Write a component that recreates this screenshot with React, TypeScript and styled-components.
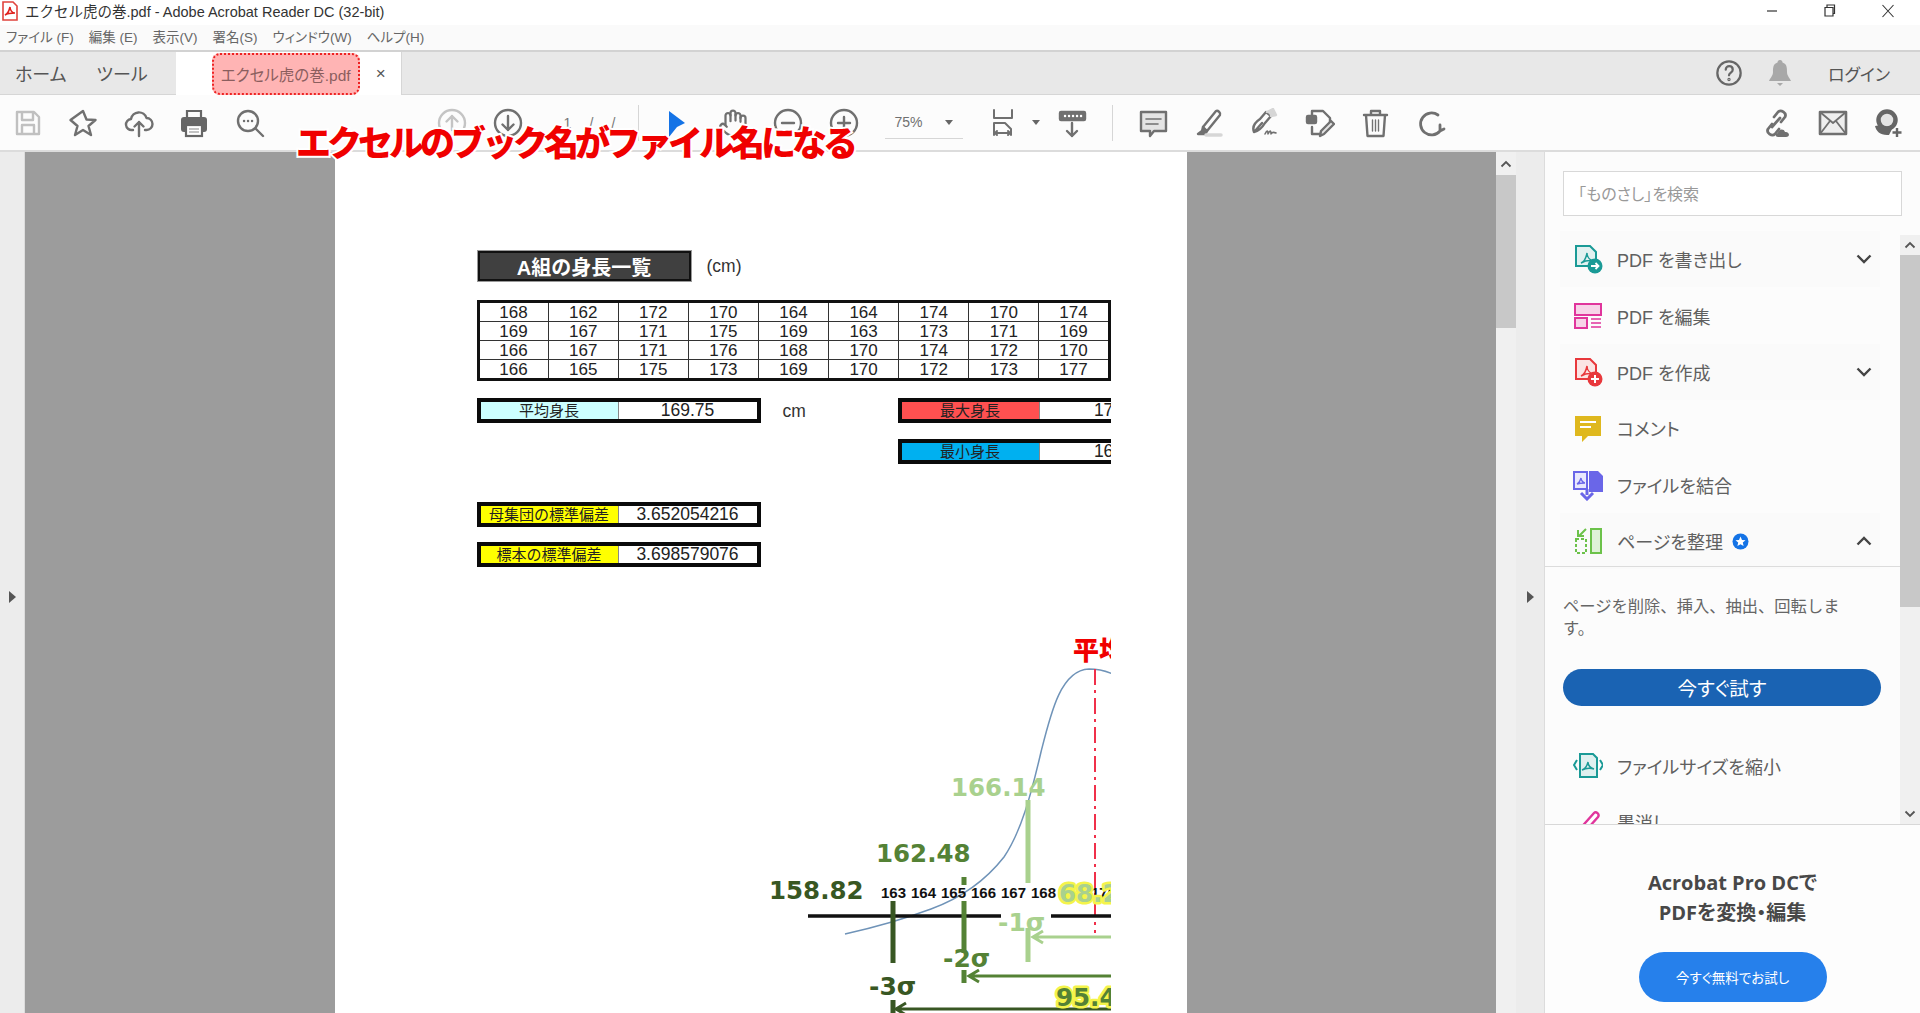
import React, { FC, ReactNode } from "react";
import styled, { createGlobalStyle } from "styled-components";
import { Hand } from "lucide-react";

const JP = `"Liberation Sans", "Noto Sans CJK JP", sans-serif`;

const GlobalStyle = createGlobalStyle`
  html, body {
    margin: 0;
    padding: 0;
    background: #fff;
    font-family: ${JP};
  }
`;

const Window = styled.div`
  position: relative;
  width: 1920px;
  height: 1013px;
  overflow: hidden;
  display: flex;
  flex-direction: column;
  color: #444;
  font-feature-settings: "palt";
`;

/* ---- title + menu ---- */
const TitleBar = styled.div`
  height: 25px;
  flex: none;
  box-sizing: border-box;
  display: flex;
  align-items: center;
  background: #fff;
  padding: 0 0 4px 2px;
`;

const TitleText = styled.div`
  margin-left: 7px;
  font-size: 14.5px;
  color: #333;
  white-space: nowrap;
  font-feature-settings: normal;
`;

const WindowButtons = styled.div`
  margin-left: auto;
  display: flex;
  align-items: center;
  padding-right: 25px;
  gap: 45px;
`;

const MenuBar = styled.div`
  height: 25px;
  flex: none;
  box-sizing: border-box;
  display: flex;
  align-items: center;
  background: #fafafa;
  padding: 0 0 3px 6px;
  gap: 15px;
`;

const MenuItem = styled.div`
  font-size: 13.5px;
  color: #666;
  white-space: nowrap;
`;

/* ---- tabs ---- */
const TabBar = styled.div`
  height: 45px;
  flex: none;
  box-sizing: border-box;
  display: flex;
  align-items: stretch;
  background: #e8e8e8;
  border-top: 2px solid #d2d2d2;
  border-bottom: 1px solid #d6d6d6;
`;

const NavTab = styled.div`
  display: flex;
  align-items: center;
  font-size: 18px;
  color: #555;
  margin-left: ${(props: { $left: number }) => props.$left}px;
  white-space: nowrap;
`;

const ActiveTab = styled.div`
  position: relative;
  margin-left: 28px;
  width: 225px;
  margin-bottom: -1px;
  background: #fff;
  display: flex;
  align-items: center;
  border-right: 1px solid #d6d6d6;
`;

const TabLabel = styled.div`
  box-sizing: border-box;
  margin-left: 36px;
  width: 148px;
  height: 42px;
  border: 2px dotted #ee2222;
  border-radius: 8px;
  background: #ffb4b4;
  color: #8b5e5e;
  font-size: 15.5px;
  display: flex;
  align-items: center;
  justify-content: center;
  white-space: nowrap;
`;

const TabClose = styled.div`
  margin-left: 16px;
  font-size: 17px;
  color: #555;
`;

const TabRight = styled.div`
  margin-left: auto;
  display: flex;
  align-items: center;
  padding-right: 30px;
  gap: 24px;
`;

const LoginText = styled.div`
  font-size: 17px;
  color: #555;
  margin-left: 11px;
  white-space: nowrap;
`;

/* ---- toolbar ---- */
const Toolbar = styled.div`
  height: 57px;
  flex: none;
  box-sizing: border-box;
  display: flex;
  align-items: center;
  background: #fcfcfc;
  border-bottom: 2px solid #dcdcdc;
`;

const ToolButton = styled.div`
  width: 55.5px;
  flex: none;
  display: flex;
  align-items: center;
  justify-content: center;
  color: #707070;
`;

const ToolGap = styled.div`
  flex: none;
  width: ${(props: { $w: number }) => props.$w}px;
`;

const ToolSeparator = styled.div`
  flex: none;
  width: 1px;
  height: 36px;
  background: #d6d6d6;
`;

const PageNum = styled.div`
  flex: none;
  width: 102px;
  display: flex;
  justify-content: space-between;
  padding: 0 22px 0 28px;
  box-sizing: border-box;
  font-size: 14px;
  color: #777;
`;

const ZoomBox = styled.div`
  flex: none;
  box-sizing: border-box;
  width: 78px;
  height: 32px;
  display: flex;
  align-items: center;
  justify-content: space-between;
  padding: 0 10px 0 10px;
  border-bottom: 1px solid #d6d6d6;
  font-size: 14px;
  color: #707070;
`;

const Caret = styled.div`
  width: 0;
  height: 0;
  border-left: 4px solid transparent;
  border-right: 4px solid transparent;
  border-top: 5px solid #666;
`;

const Caption = styled.div`
  position: absolute;
  left: 296px;
  top: 119px;
  font-family: "Noto Sans CJK JP", sans-serif;
  font-feature-settings: normal;
  font-size: 35px;
  font-weight: 900;
  letter-spacing: -4px;
  line-height: 44px;
  color: #f00000;
  white-space: nowrap;
  -webkit-text-stroke: 4px #fff;
  paint-order: stroke fill;
`;

/* ---- main ---- */
const Main = styled.div`
  flex: 1;
  min-height: 0;
  display: flex;
`;

const Rail = styled.div`
  flex: none;
  width: ${(props: { $w: number }) => props.$w}px;
  display: flex;
  align-items: center;
  justify-content: center;
  background: #ececec;
  border-right: 1px solid #dcdcdc;
  box-sizing: border-box;
`;

const RailArrow = styled.div`
  width: 0;
  height: 0;
  margin-top: 28px;
  border-top: 6px solid transparent;
  border-bottom: 6px solid transparent;
  border-left: 7px solid #555;
`;

const DocArea = styled.div`
  flex: 1;
  min-width: 0;
  background: #9c9c9c;
  display: flex;
  justify-content: center;
`;

const PdfPage = styled.div`
  width: 852px;
  height: 100%;
  box-sizing: border-box;
  background: #fff;
  padding: 98px 76px 0 142px;
  overflow: hidden;
  color: #222;
  font-feature-settings: normal;
`;

const PageContent = styled.div`
  width: 634px;
  overflow: hidden;
`;

const Heading = styled.div`
  display: flex;
  align-items: center;
  gap: 15px;
  height: 32px;
`;

const HeadingBox = styled.div`
  box-sizing: border-box;
  width: 215px;
  height: 32px;
  background: #404040;
  border: 3px solid #111;
  outline: 1px solid #999;
  outline-offset: -1px;
  color: #fff;
  font-size: 20px;
  font-weight: 700;
  display: flex;
  align-items: center;
  justify-content: center;
`;

const UnitText = styled.div`
  flex: none;
  font-size: 17.5px;
  color: #333;
`;

const StatUnit = styled(UnitText)`
  margin: 2px 0 0 22px;
  width: 115px;
`;

const HeightTable = styled.table`
  margin-top: 18px;
  width: 634px;
  height: 79px;
  table-layout: fixed;
  border-collapse: collapse;
  border: 3.5px solid #111;
`;

const HeightCell = styled.td`
  padding: 0;
  height: 18px;
  line-height: 17px;
  text-align: center;
  font-size: 17px;
  color: #222;
  border: 1.5px solid #333;
  border-left-width: 1px;
  border-right-width: 1px;
`;

const StatRow = styled.div`
  display: flex;
  align-items: center;
  margin-top: ${(props: { $top: number }) => props.$top}px;
`;

const Stat = styled.div`
  flex: none;
  box-sizing: border-box;
  width: 284px;
  height: 25px;
  border: 4px solid #0a0a0a;
  display: flex;
  background: #fff;
  margin-left: ${(props: { $left?: number }) => props.$left ?? 0}px;
`;

const StatLabel = styled.div`
  flex: none;
  width: 138px;
  background: ${(props: { $bg: string }) => props.$bg};
  border-right: 1px solid #888;
  box-sizing: border-box;
  display: flex;
  align-items: center;
  justify-content: center;
  font-size: 15px;
  color: #222;
  line-height: 17px;
  white-space: nowrap;
`;

const StatValue = styled.div`
  flex: 1;
  display: flex;
  align-items: center;
  justify-content: center;
  font-size: 17.5px;
  line-height: 17px;
  color: #222;
`;

const Chart = styled.svg`
  display: block;
  margin-top: 63px;
  width: 634px;
  height: 383px;
`;

const ChartNumber = styled.text`
  font-family: "DejaVu Sans", sans-serif;
  font-weight: 700;
  font-size: 24.5px;
  fill: ${(props: { $fill: string }) => props.$fill};
`;

const GlowNumber = styled(ChartNumber)`
  stroke: #f4f44a;
  stroke-width: 5px;
  stroke-linejoin: round;
  paint-order: stroke fill;
`;

const AxisNumber = styled.text`
  font-family: "Liberation Sans", sans-serif;
  font-weight: 700;
  font-size: 15px;
  fill: #111;
`;

const Sigma = styled.text`
  font-family: "DejaVu Sans", sans-serif;
  font-weight: 700;
  font-size: 25px;
  fill: ${(props: { $fill: string }) => props.$fill};
`;

const MeanLabel = styled.text`
  font-family: "Noto Sans CJK JP", sans-serif;
  font-weight: 900;
  font-size: 26px;
  fill: #f00000;
`;

/* ---- scrollbars ---- */
const ScrollBar = styled.div`
  flex: none;
  width: 20px;
  margin-top: ${(props: { $top?: number }) => props.$top ?? 0}px;
  background: #f0f0f0;
  display: flex;
  flex-direction: column;
  align-items: center;
`;

const ScrollArrow = styled.div`
  flex: none;
  height: ${(props: { $h: number }) => props.$h}px;
  display: flex;
  align-items: center;
  justify-content: center;
`;

const ScrollThumb = styled.div`
  flex: none;
  width: 100%;
  height: ${(props: { $h: number }) => props.$h}px;
  background: #c8c8c8;
`;

const ScrollFill = styled.div`
  flex: 1;
`;

/* ---- right pane ---- */
const RightPane = styled.div`
  flex: none;
  width: 375px;
  background: #fcfcfc;
  display: flex;
  flex-direction: column;
`;

const SearchBox = styled.div`
  flex: none;
  box-sizing: border-box;
  margin: 19px 0 15px 18px;
  width: 339px;
  height: 45px;
  background: #fff;
  border: 1px solid #d8d8d8;
  padding: 0 0 2px 14px;
  display: flex;
  align-items: center;
  font-size: 16px;
  color: #999;
`;

const ToolsArea = styled.div`
  flex: 1;
  min-height: 0;
  display: flex;
  overflow: hidden;
`;

const ToolsList = styled.div`
  flex: 1;
  min-width: 0;
  overflow: hidden;
`;

const ToolRow = styled.div`
  box-sizing: border-box;
  margin-left: 15px;
  width: 320px;
  height: 56.4px;
  padding: 0 8px 0 10px;
  display: flex;
  align-items: center;
  background: ${(props: { $shaded?: boolean }) =>
    props.$shaded ? "#fafafa" : "transparent"};
`;

const ToolIcon = styled.div`
  flex: none;
  width: 36px;
  display: flex;
  justify-content: center;
`;

const ToolLabel = styled.div`
  margin-left: 11px;
  font-size: 18px;
  color: #606060;
  white-space: nowrap;
`;

const Chevron = styled.svg`
  margin-left: auto;
`;

const Divider = styled.div`
  height: 1px;
  margin-top: -3px;
  background: #dcdcdc;
`;

const Description = styled.div`
  margin: 28px 0 0 18px;
  width: 285px;
  font-size: 16.3px;
  line-height: 22px;
  color: #666;
  font-feature-settings: normal;
`;

const TryButton = styled.div`
  box-sizing: border-box;
  margin: 30px 0 31px 18px;
  width: 318px;
  height: 37px;
  border-radius: 19px;
  background: #1a63b3;
  color: #fff;
  font-size: 19.5px;
  display: flex;
  align-items: center;
  justify-content: center;
`;

const Promo = styled.div`
  flex: none;
  height: 189px;
  box-sizing: border-box;
  border-top: 1px solid #d8d8d8;
  padding-top: 43px;
  display: flex;
  flex-direction: column;
  align-items: center;
  background: #fdfdfd;
`;

const PromoText = styled.div`
  font-family: "Open Sans", "Noto Sans CJK JP", sans-serif;
  font-size: 20px;
  line-height: 30px;
  font-weight: 700;
  color: #484848;
  text-align: center;
`;

const PromoButton = styled.div`
  margin-top: 24px;
  width: 188px;
  height: 50px;
  border-radius: 25px;
  background: #2680eb;
  color: #fff;
  font-size: 13.5px;
  display: flex;
  align-items: center;
  justify-content: center;
`;

const StarBadge = styled.svg`
  margin-left: 9px;
  flex: none;
`;

/* ---- icons ---- */
const Line = styled.svg`
  fill: none;
  stroke: ${(props: { $c?: string }) => props.$c ?? "#707070"};
  stroke-width: 2.4;
  stroke-linecap: round;
  stroke-linejoin: round;
  display: block;
`;

const Ic: FC<{ children: ReactNode; c?: string; size?: number }> = ({
  children,
  c,
  size = 30,
}) => (
  <Line $c={c} width={size} height={size} viewBox="0 0 30 30">
    {children}
  </Line>
);

const PdfMark: FC<{ c: string }> = ({ c }) => (
  <path
    d="M8 19c3-1 5-5 6-10 0 4 3 7 6 8-4-1-8 0-12 2z"
    fill="none"
    stroke={c}
    strokeWidth="1.5"
  />
);

const ChevronIcon: FC<{ up?: boolean }> = ({ up }) => (
  <Chevron width="16" height="10" viewBox="0 0 16 10">
    <path
      d={up ? "M1.5 8.5 8 2l6.5 6.5" : "M1.5 1.5 8 8l6.5-6.5"}
      fill="none"
      stroke="#444"
      strokeWidth="2.4"
    />
  </Chevron>
);

const SmallArrow: FC<{ up?: boolean }> = ({ up }) => (
  <svg width="12" height="8" viewBox="0 0 12 8">
    <path
      d={up ? "M1.5 6.5 6 2l4.5 4.5" : "M1.5 1.5 6 6l4.5-4.5"}
      fill="none"
      stroke="#555"
      strokeWidth="1.8"
    />
  </svg>
);

const heights = [
  [168, 162, 172, 170, 164, 164, 174, 170, 174],
  [169, 167, 171, 175, 169, 163, 173, 171, 169],
  [166, 167, 171, 176, 168, 170, 174, 172, 170],
  [166, 165, 175, 173, 169, 170, 172, 173, 177],
];

const axisLabels = [
  { x: 880, t: "163" },
  { x: 910, t: "164" },
  { x: 940, t: "165" },
  { x: 970, t: "166" },
  { x: 1000, t: "167" },
  { x: 1030, t: "168" },
];

const App: FC = () => {
  return (
    <Window>
      <GlobalStyle />
      <TitleBar>
        <svg width="16" height="20" viewBox="0 0 16 20">
          <path d="M1 1h10l4 4v14H1z" fill="#fff" stroke="#e0433c" strokeWidth="1.6" />
          <path d="M3 14c3-1 4-4 5-8 0 3 2 6 5 6-3 0-7 0-10 2z" fill="none" stroke="#e0201c" strokeWidth="1.6" />
        </svg>
        <TitleText>エクセル虎の巻.pdf - Adobe Acrobat Reader DC (32-bit)</TitleText>
        <WindowButtons>
          <svg width="12" height="12" viewBox="0 0 12 12">
            <path d="M1 6h10" stroke="#333" strokeWidth="1.2" />
          </svg>
          <svg width="13" height="13" viewBox="0 0 13 13">
            <path d="M2 3.5h8v8.5H2zM4 3.5V1h7.5v8.5H10" fill="none" stroke="#333" strokeWidth="1.2" />
          </svg>
          <svg width="14" height="14" viewBox="0 0 14 14">
            <path d="M1.5 1 12.5 13M12.5 1 1.5 13" stroke="#333" strokeWidth="1.1" />
          </svg>
        </WindowButtons>
      </TitleBar>

      <MenuBar>
        <MenuItem>ファイル (F)</MenuItem>
        <MenuItem>編集 (E)</MenuItem>
        <MenuItem>表示(V)</MenuItem>
        <MenuItem>署名(S)</MenuItem>
        <MenuItem>ウィンドウ(W)</MenuItem>
        <MenuItem>ヘルプ(H)</MenuItem>
      </MenuBar>

      <TabBar>
        <NavTab $left={15}>ホーム</NavTab>
        <NavTab $left={30}>ツール</NavTab>
        <ActiveTab>
          <TabLabel>エクセル虎の巻.pdf</TabLabel>
          <TabClose>×</TabClose>
        </ActiveTab>
        <TabRight>
          <Ic size={28} c="#666">
            <circle cx="15" cy="15" r="12.5" />
            <path d="M11.5 11.5c0-5 7.5-5 7.5 0 0 3-4 3-4 6" />
            <circle cx="15" cy="22" r=".6" />
          </Ic>
          <svg width="26" height="28" viewBox="0 0 26 28">
            <path d="M13 1c2 0 2.5 1.5 2.5 2.5C20 5 20 9 20 13c0 4 3 6 4 9H2c1-3 4-5 4-9 0-4 0-8 4.500-9.500C10.500 2.500 11 1 13 1zM10 24h6l-3 3z" fill="#a8a8a8" />
          </svg>
          <LoginText>ログイン</LoginText>
        </TabRight>
      </TabBar>

      <Toolbar>
        <ToolButton>
          <Ic c="#c0c0c0">
            <path d="M4 4h17l5 5v17H4zM9 4v8h11V4M9 26v-9h12v9" />
          </Ic>
        </ToolButton>
        <ToolButton>
          <Ic>
            <polygon points="15,3 18.500,11.500 27.500,12 20.500,18 23,27 15,22 7,27 9.500,18 2.500,12" />
          </Ic>
        </ToolButton>
        <ToolButton>
          <Ic>
            <path d="M9 22H8a5.500 5.500 0 0 1-1-11 8 8 0 0 1 15.500-1 6 6 0 0 1 0 12H21M15 28V14M10.500 18.500 15 14l4.500 4.500" />
          </Ic>
        </ToolButton>
        <ToolButton>
          <svg width="30" height="30" viewBox="0 0 30 30">
            <path d="M8 3h14v7H8z" fill="none" stroke="#666" strokeWidth="2.200" />
            <rect x="2" y="9" width="26" height="15" rx="3" fill="#666" />
            <rect x="7" y="17" width="16" height="11" fill="#fff" stroke="#666" strokeWidth="2.200" />
            <path d="M10 21h10M10 24h10" stroke="#888" strokeWidth="1.200" />
          </svg>
        </ToolButton>
        <ToolButton>
          <Ic>
            <circle cx="13" cy="13" r="10" />
            <path d="M20.500 20.500 28 28M9 13h.1M13 13h.1M17 13h.1" />
          </Ic>
        </ToolButton>
        <ToolGap $w={147} />
        <ToolButton>
          <Ic c="#c4c4c4">
            <circle cx="15" cy="15" r="13" />
            <path d="M15 22V8M9.500 13.500 15 8l5.500 5.500" />
          </Ic>
        </ToolButton>
        <ToolButton>
          <Ic>
            <circle cx="15" cy="15" r="13" />
            <path d="M15 8v14M9.500 16.500 15 22l5.500-5.500" />
          </Ic>
        </ToolButton>
        <PageNum>
          <span>1</span>
          <span>/</span>
          <span>/</span>
        </PageNum>
        <ToolSeparator />
        <ToolGap $w={11} />
        <ToolButton>
          <svg width="30" height="30" viewBox="0 0 30 30">
            <polygon points="7,3 23,15 15,19 7,29" fill="#1473e6" />
          </svg>
        </ToolButton>
        <ToolButton>
          <Hand size={30} strokeWidth={1.8} />
        </ToolButton>
        <ToolButton>
          <Ic>
            <circle cx="15" cy="15" r="13" />
            <path d="M9 15h12" />
          </Ic>
        </ToolButton>
        <ToolButton>
          <Ic>
            <circle cx="15" cy="15" r="13" />
            <path d="M9 15h12M15 9v12" />
          </Ic>
        </ToolButton>
        <ToolGap $w={13} />
        <ZoomBox>
          75%
          <Caret />
        </ZoomBox>
        <ToolGap $w={14} />
        <ToolButton>
          <Ic>
            <path d="M5 2v8h18V2M5 27V15h11l6 6v6M5 25h17M8 23l-2 2 2 2M19 23l2 2-2 2" strokeWidth="2" />
          </Ic>
        </ToolButton>
        <Caret />
        <ToolGap $w={4} />
        <ToolButton>
          <Ic>
            <rect x="3" y="4" width="25" height="8" rx="1" fill="#707070" />
            <path d="M8 8h.1M12 8h.1M16 8h.1M20 8h.1M24 8h.1" stroke="#fff" />
            <path d="M15 15v13M10 23l5 5 5-5" />
          </Ic>
        </ToolButton>
        <ToolGap $w={12} />
        <ToolSeparator />
        <ToolGap $w={13} />
        <ToolButton>
          <Ic>
            <path d="M3 4h25v19H16l-4 5v-5H3z" fill="#e4e4e4" />
            <path d="M8 11h15M8 16h12" strokeWidth="1.600" />
          </Ic>
        </ToolButton>
        <ToolButton>
          <Ic>
            <path d="M9 19 22 3c2-1 5 2 4 4L13 23z" />
            <path d="M9 19l-1 4-4 3h7l2-3" fill="#707070" />
            <path d="M12 27h15" stroke="#d6d6d6" strokeWidth="3.500" />
          </Ic>
        </ToolButton>
        <ToolButton>
          <Ic>
            <path d="M5 24c-2-5 0-9 6-13l6-7 5 4-6 7c-3 5-6 8-11 9zM6 23l7-8" />
            <path d="M18 4l6-3 3 6-5 1" stroke="#d6d6d6" fill="#d6d6d6" />
            <path d="M16 26c2-4 3-4 3 0 2-4 3-4 3 0 1-2 3-2 5-1" strokeWidth="1.600" />
          </Ic>
        </ToolButton>
        <ToolButton>
          <Ic>
            <rect x="2" y="8" width="9" height="7" rx="1" fill="#707070" />
            <path d="M7 7V3h11l7 7v4M7 19v7h8" />
            <path d="M15 28l1-5 10-10 3 3-10 10z" fill="#e4e4e4" />
          </Ic>
        </ToolButton>
        <ToolButton>
          <Ic>
            <path d="M4 7h23M11 7V3h9v4M6 7l1.500 21h16L25 7" />
            <path d="M12.500 12v11M15.500 12v11M18.500 12v11" strokeWidth="1.400" />
          </Ic>
        </ToolButton>
        <ToolButton>
          <Ic>
            <path d="M24 23a11 11 0 1 1-2-16M24 23v-6M24 23l4-2" strokeWidth="2.800" />
          </Ic>
        </ToolButton>
        <ToolGap $w={291} />
        <ToolButton>
          <Ic>
            <path d="M12 9l4-5c3-3 9 1 7 5l-4 5M17 21l-4 5c-3 3-9-1-7-5l4-5M10 19l8-9" strokeWidth="2.800" />
            <path d="M16 29c-3 0-3-4 0-4 0-4 6-5 7-1 4-1 6 5 1 5z" fill="#707070" stroke="none" />
          </Ic>
        </ToolButton>
        <ToolButton>
          <Ic>
            <rect x="2" y="4" width="26" height="22" fill="#eee" strokeWidth="2.600" />
            <path d="M2 4l13 11L28 4M2 26l10-13M28 26 18 13" strokeWidth="1.800" />
          </Ic>
        </ToolButton>
        <ToolButton>
          <svg width="30" height="30" viewBox="0 0 30 30">
            <circle cx="14" cy="12" r="8.500" fill="#e4e4e4" stroke="#666" strokeWidth="4.500" />
            <path d="M14 27C7 27 3 23 2 18l6-1c2 2 8 2 10 0l1 4-3 6z" fill="#666" />
            <path d="M24 20v9M19.500 24.500h9" stroke="#666" strokeWidth="2.400" />
          </svg>
        </ToolButton>
      </Toolbar>

      <Caption>エクセルのブック名がファイル名になる</Caption>

      <Main>
        <Rail $w={25}>
          <RailArrow />
        </Rail>
        <DocArea>
          <PdfPage>
            <PageContent>
              <Heading>
                <HeadingBox>A組の身長一覧</HeadingBox>
                <UnitText>(cm)</UnitText>
              </Heading>
              <HeightTable>
                <tbody>
                  {heights.map((row, r) => (
                    <tr key={r}>
                      {row.map((v, c) => (
                        <HeightCell key={c}>{v}</HeightCell>
                      ))}
                    </tr>
                  ))}
                </tbody>
              </HeightTable>
              <StatRow $top={17}>
                <Stat>
                  <StatLabel $bg="#ccffff">平均身長</StatLabel>
                  <StatValue>169.75</StatValue>
                </Stat>
                <StatUnit>cm</StatUnit>
                <Stat>
                  <StatLabel $bg="#ff5050">最大身長</StatLabel>
                  <StatValue>177</StatValue>
                </Stat>
              </StatRow>
              <StatRow $top={16}>
                <Stat $left={421}>
                  <StatLabel $bg="#00b0f0">最小身長</StatLabel>
                  <StatValue>162</StatValue>
                </Stat>
              </StatRow>
              <StatRow $top={38}>
                <Stat>
                  <StatLabel $bg="#ffff00">母集団の標準偏差</StatLabel>
                  <StatValue>3.652054216</StatValue>
                </Stat>
              </StatRow>
              <StatRow $top={15}>
                <Stat>
                  <StatLabel $bg="#ffff00">標本の標準偏差</StatLabel>
                  <StatValue>3.698579076</StatValue>
                </Stat>
              </StatRow>
              <Chart viewBox="476 630 634 383">
                <MeanLabel x="1072" y="660">平均身長</MeanLabel>
                <path
                  d="M844 934 C 880 926 903 919 930 909 C 960 898 985 880 1003 857 C 1020 832 1030 795 1040 752 C 1050 712 1060 670 1088 669 C 1098 669 1105 671 1112 674"
                  fill="none"
                  stroke="#6f93b8"
                  strokeWidth="1.500"
                />
                <path d="M1094 669V933" stroke="#f0304a" strokeWidth="2" strokeDasharray="16 5 3 5" />

                <path d="M807 916H1000M1050 916H1110" stroke="#111" strokeWidth="3.500" />

                <path d="M1027 800V883M1027 928V962" stroke="#a9d18e" strokeWidth="5" />
                <path d="M963 877V885M963 901V953M963 970V983" stroke="#548235" strokeWidth="5" />
                <path d="M892 901V963M892 1000V1013" stroke="#385723" strokeWidth="5" />

                <path d="M1110 937H1032M1042 931l-10 6 10 6" fill="none" stroke="#a9d18e" strokeWidth="3" />
                <path d="M1110 976H968M978 970l-10 6 10 6" fill="none" stroke="#548235" strokeWidth="3" />
                <path d="M1110 1009H895M905 1003l-10 6 10 6" fill="none" stroke="#385723" strokeWidth="3" />

                <ChartNumber $fill="#a9d18e" x="950" y="796">166.14</ChartNumber>
                <ChartNumber $fill="#548235" x="875" y="862">162.48</ChartNumber>
                <ChartNumber $fill="#385723" x="768" y="899">158.82</ChartNumber>

                {axisLabels.map((a) => (
                  <AxisNumber key={a.x} x={a.x} y="898">
                    {a.t}
                  </AxisNumber>
                ))}
                <AxisNumber x="1090" y="898">170</AxisNumber>

                <GlowNumber $fill="#a9d18e" x="1058" y="902">68.27%</GlowNumber>
                <GlowNumber $fill="#548235" x="1055" y="1006">95.45%</GlowNumber>

                <Sigma $fill="#a9d18e" x="997" y="931">-1σ</Sigma>
                <Sigma $fill="#548235" x="942" y="967">-2σ</Sigma>
                <Sigma $fill="#385723" x="868" y="995">-3σ</Sigma>
              </Chart>
            </PageContent>
          </PdfPage>
        </DocArea>
        <ScrollBar>
          <ScrollArrow $h={23}>
            <SmallArrow up />
          </ScrollArrow>
          <ScrollThumb $h={153} />
        </ScrollBar>
        <Rail $w={29}>
          <RailArrow />
        </Rail>
        <RightPane>
          <SearchBox>「ものさし」を検索</SearchBox>
          <ToolsArea>
            <ToolsList>
              <ToolRow $shaded>
                <ToolIcon>
                  <svg width="30" height="30" viewBox="0 0 30 30">
                    <path d="M3 2h14l6 6v14H3z" fill="#e2f1f0" stroke="#1a9a96" strokeWidth="2" />
                    <PdfMark c="#1a9a96" />
                    <circle cx="22" cy="22" r="7.500" fill="#1a9a96" />
                    <path d="M18 22h7M22.500 19l3 3-3 3" stroke="#fff" strokeWidth="1.800" fill="none" />
                  </svg>
                </ToolIcon>
                <ToolLabel>PDF を書き出し</ToolLabel>
                <ChevronIcon />
              </ToolRow>
              <ToolRow>
                <ToolIcon>
                  <svg width="30" height="30" viewBox="0 0 30 30">
                    <rect x="2" y="3" width="26" height="11" fill="#f7d4e8" stroke="#e0359c" strokeWidth="2" />
                    <rect x="2" y="17" width="12" height="10" fill="#f7d4e8" stroke="#e0359c" strokeWidth="2" />
                    <path d="M18 18h10M18 22h10M18 26h10" stroke="#e0359c" strokeWidth="1.500" />
                  </svg>
                </ToolIcon>
                <ToolLabel>PDF を編集</ToolLabel>
              </ToolRow>
              <ToolRow $shaded>
                <ToolIcon>
                  <svg width="30" height="30" viewBox="0 0 30 30">
                    <path d="M3 2h14l6 6v14H3z" fill="#fbe3e3" stroke="#e8383c" strokeWidth="2" />
                    <PdfMark c="#e8383c" />
                    <circle cx="22" cy="22" r="7.500" fill="#e8383c" />
                    <path d="M18 22h8M22 18v8" stroke="#fff" strokeWidth="2" />
                  </svg>
                </ToolIcon>
                <ToolLabel>PDF を作成</ToolLabel>
                <ChevronIcon />
              </ToolRow>
              <ToolRow>
                <ToolIcon>
                  <svg width="30" height="30" viewBox="0 0 30 30">
                    <path d="M2 3h26v20H15l-6 6v-6H2z" fill="#dfb81e" />
                    <path d="M7 9h16M7 14h11" stroke="#fff" strokeWidth="2" />
                  </svg>
                </ToolIcon>
                <ToolLabel>コメント</ToolLabel>
              </ToolRow>
              <ToolRow>
                <ToolIcon>
                  <svg width="32" height="32" viewBox="0 0 32 32">
                    <path d="M2 3h13v17H2z" fill="#e9e8fd" stroke="#6a66e8" strokeWidth="2" />
                    <path d="M17 2h9l5 5v16H17z" fill="#6a66e8" />
                    <path d="M5 15c2-1 3-3 4-6 0 2 2 5 4 5-3 0-5 0-8 1z" fill="none" stroke="#6a66e8" strokeWidth="1.400" />
                    <path d="M15 20v6M9 24l6 6 6-6" fill="none" stroke="#6a66e8" strokeWidth="3" />
                  </svg>
                </ToolIcon>
                <ToolLabel>ファイルを結合</ToolLabel>
              </ToolRow>
              <ToolRow $shaded>
                <ToolIcon>
                  <svg width="30" height="30" viewBox="0 0 30 30">
                    <rect x="18" y="3" width="10" height="24" fill="#dff2d8" stroke="#6cc24a" strokeWidth="2" />
                    <path d="M3 13h10v14H3z" fill="none" stroke="#6cc24a" strokeWidth="2" strokeDasharray="3 2" />
                    <path d="M13 3 6 10M5 4v6h6" fill="none" stroke="#6cc24a" strokeWidth="2" />
                  </svg>
                </ToolIcon>
                <ToolLabel>ページを整理</ToolLabel>
                <StarBadge width="17" height="17" viewBox="0 0 17 17">
                  <circle cx="8.500" cy="8.500" r="8" fill="#1473e6" />
                  <polygon points="8.500,3.500 10,7 13.500,7.300 10.800,9.500 11.600,13 8.500,11.200 5.400,13 6.200,9.500 3.500,7.300 7,7" fill="#fff" />
                </StarBadge>
                <ChevronIcon up />
              </ToolRow>
              <Divider />
              <Description>ページを削除、挿入、抽出、回転します。</Description>
              <TryButton>今すぐ試す</TryButton>
              <ToolRow>
                <ToolIcon>
                  <svg width="30" height="30" viewBox="0 0 30 30">
                    <path d="M7 3h13l4 4v19H7z" fill="#dff0ef" stroke="#1a9a96" strokeWidth="2" />
                    <path d="M9 19c3-1 5-4 6-8 0 4 3 6 6 7-4-1-8-1-12 1z" fill="none" stroke="#1a9a96" strokeWidth="1.500" />
                    <path d="M4 9l-3 5 3 5M27 9l3 5-3 5" fill="none" stroke="#1a9a96" strokeWidth="2" />
                  </svg>
                </ToolIcon>
                <ToolLabel>ファイルサイズを縮小</ToolLabel>
              </ToolRow>
              <ToolRow>
                <ToolIcon>
                  <svg width="30" height="30" viewBox="0 0 30 30">
                    <path d="M5 24 21 6c2-2 6 1 4 4L9 28z" fill="#fff" stroke="#e0359c" strokeWidth="2.400" />
                  </svg>
                </ToolIcon>
                <ToolLabel>墨消し</ToolLabel>
              </ToolRow>
            </ToolsList>
            <ScrollBar $top={4}>
              <ScrollArrow $h={20}>
                <SmallArrow up />
              </ScrollArrow>
              <ScrollThumb $h={352} />
              <ScrollFill />
              <ScrollArrow $h={20}>
                <SmallArrow />
              </ScrollArrow>
            </ScrollBar>
          </ToolsArea>
          <Promo>
            <PromoText>
              Acrobat Pro DCで
              <br />
              PDFを変換・編集
            </PromoText>
            <PromoButton>今すぐ無料でお試し</PromoButton>
          </Promo>
        </RightPane>
      </Main>
    </Window>
  );
};

export default App;
